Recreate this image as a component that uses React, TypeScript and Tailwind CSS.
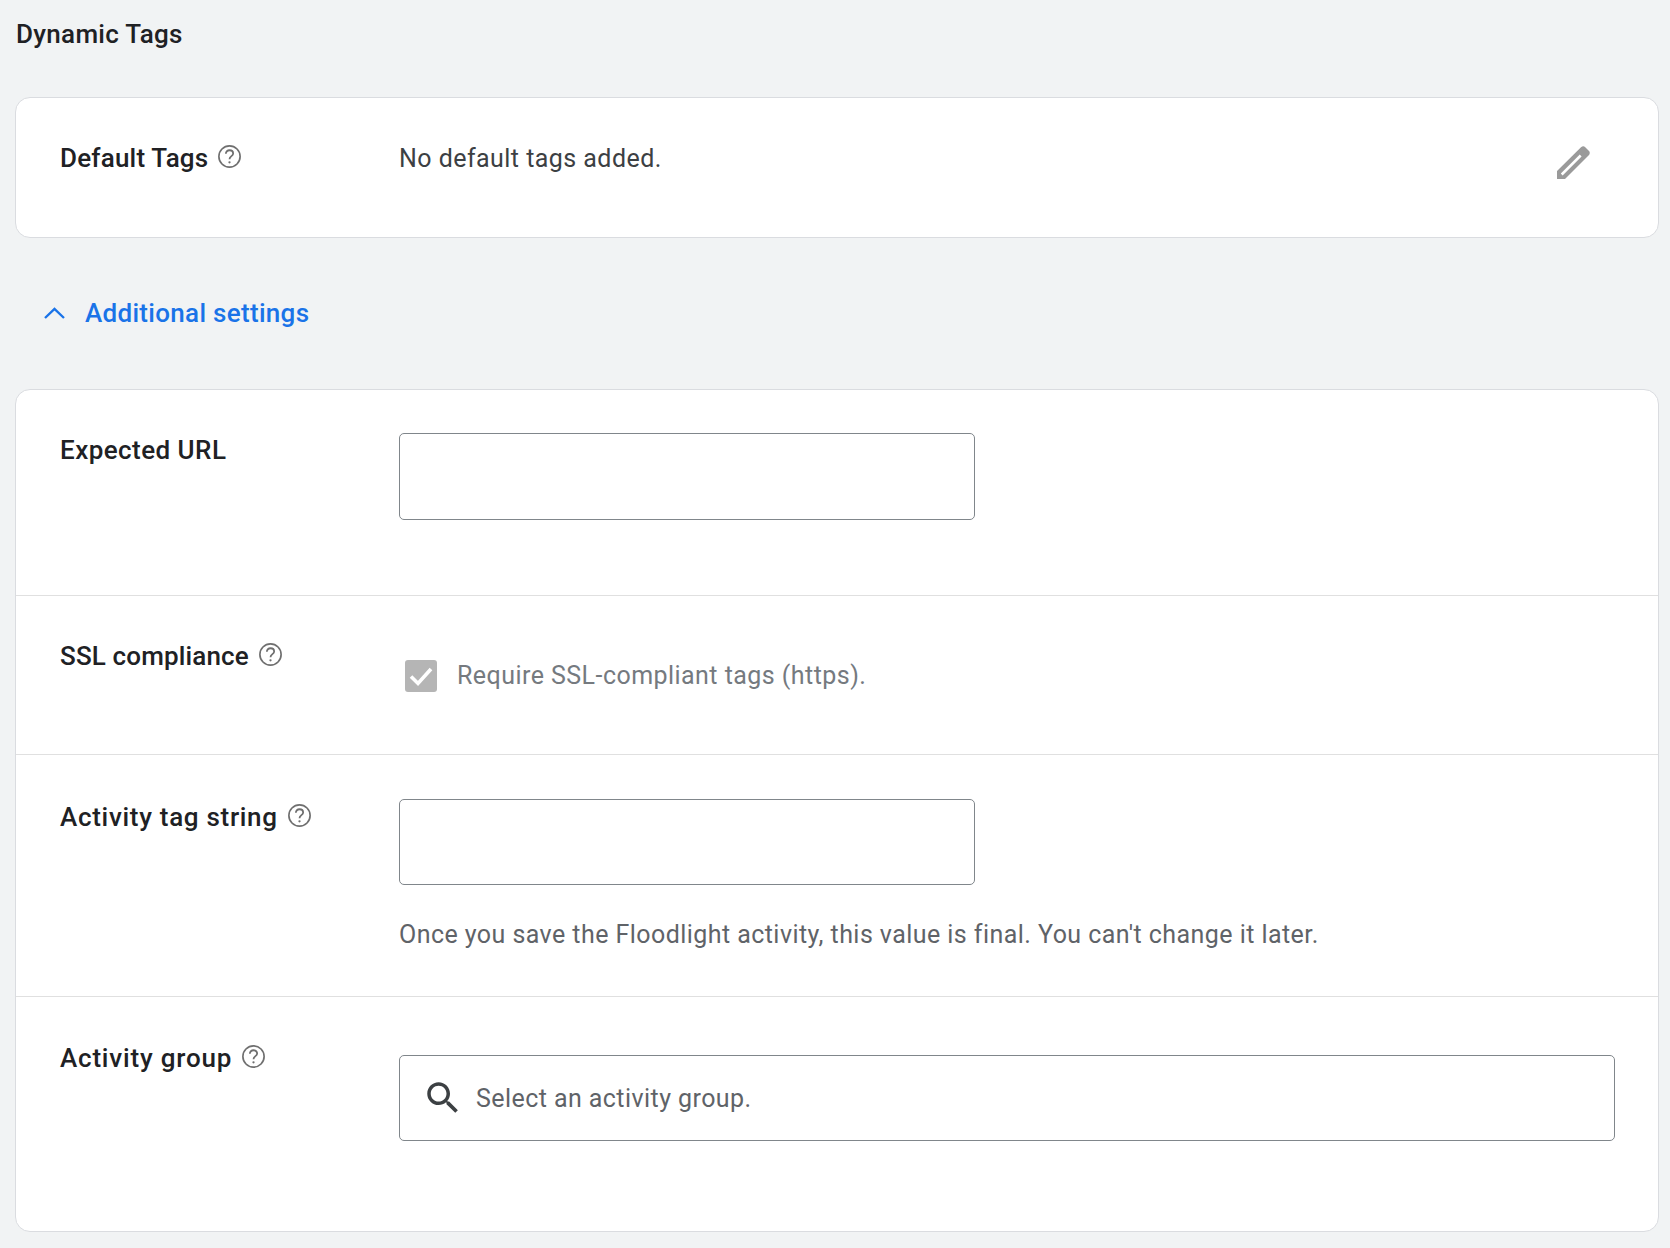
const HelpIcon = () => (
  <svg viewBox="0 0 24 24" className="w-[25px] h-[25px] -mt-[4px] text-[#6f6f6f] shrink-0" fill="none" stroke="currentColor">
    <circle cx="12" cy="12" r="10.200" strokeWidth="1.600" />
    <path d="M8.500 9.400c0-2 1.500-3.400 3.500-3.400s3.500 1.300 3.500 3.200c0 2.500-3.500 2.500-3.500 5.400" strokeWidth="1.700" />
    <circle cx="12" cy="17.600" r="1.100" fill="currentColor" stroke="none" />
  </svg>
);

const Label = ({ text, help, tracking }: { text: string; help?: boolean; tracking: string }) => (
  <div className="w-[339px] shrink-0 flex items-center gap-[9px] text-[26px] leading-[34px] font-medium text-[#202124]">
    <span className={tracking}>{text}</span>
    {help && <HelpIcon />}
  </div>
);

const TextBox = ({ height }: { height: string }) => (
  <div className={`w-[576px] bg-white border border-[#80868b] rounded-[5px] ${height}`} />
);

export default function App() {
  return (
    <div className="min-h-[1248px] bg-[#f1f3f4] pl-[15px] pr-[11px] font-['Roboto',sans-serif]">
      <h1 className="pl-px pt-[16px] h-[97px] text-[26px] leading-[36px] font-medium text-[#202124] tracking-[0.3px]">Dynamic Tags</h1>

      <section className="h-[141px] bg-white border border-[#dadce0] rounded-[15px] flex items-start pl-[44px] pr-[68px] pt-[43px]">
        <Label text="Default Tags" help tracking="tracking-[0.2px]" />
        <div className="flex-1 mt-[1px] text-[25px] leading-[34px] text-[#3c4043] tracking-[0.45px]">No default tags added.</div>
        <svg viewBox="0 0 33 33" className="w-[33px] h-[33px] mt-[5px] text-[#9a9a9a]" fill="currentColor">
          <path
            fillRule="evenodd"
            d="M0 33V25L24 1.200C25.500 0 27 0 28 1L32 5C33 6 33 7.500 32 9L8 33ZM3.800 27.600 5.600 29.400 24.600 10.400 22.800 8.600Z"
          />
        </svg>
      </section>

      <div className="h-[151px] pb-[2px] flex items-center gap-[20px] pl-[29px] text-[#1a73e8]">
        <svg viewBox="0 0 21 12" className="w-[21px] h-[12px]" fill="none" stroke="currentColor" strokeWidth="2.400">
          <path d="M1 11 10.500 2 20 11" />
        </svg>
        <span className="text-[26px] leading-[34px] font-medium tracking-[0.3px]">Additional settings</span>
      </div>

      <section className="h-[843px] bg-white border border-[#dadce0] rounded-[15px] flex flex-col">
        <div className="h-[206px] flex items-start pt-[43px] px-[44px] border-b border-[#e0e0e0]">
          <Label text="Expected URL" tracking="tracking-[0.45px]" />
          <TextBox height="h-[87px]" />
        </div>

        <div className="h-[159px] flex items-start pt-[43px] px-[44px] border-b border-[#e0e0e0]">
          <Label text="SSL compliance" help tracking="tracking-[0.15px]" />
          <div className="flex items-center gap-[20px] pt-[20px] pl-[6px]">
            <div className="w-[32px] h-[32px] rounded-[3px] bg-[#b5b5b5] flex items-center justify-center">
              <svg viewBox="0 0 32 32" className="w-[32px] h-[32px]" fill="none" stroke="white" strokeWidth="3.600">
                <path d="M6 16.500 13 23.500 26 9" />
              </svg>
            </div>
            <span className="text-[25px] leading-[34px] text-[#757a7f] tracking-[0.45px]">Require SSL-compliant tags (https).</span>
          </div>
        </div>

        <div className="h-[242px] flex items-start pt-[44px] px-[44px] border-b border-[#e0e0e0]">
          <div className="mt-[1px]"><Label text="Activity tag string" help tracking="tracking-[0.7px]" /></div>
          <div className="flex flex-col">
            <TextBox height="h-[86px]" />
            <p className="mt-[33px] text-[25px] leading-[34px] text-[#5f6368] tracking-[0.44px] whitespace-nowrap">
              Once you save the Floodlight activity, this value is final. You can't change it later.
            </p>
          </div>
        </div>

        <div className="flex-1 flex items-start pt-[44px] pl-[44px] pr-[43px]">
          <Label text="Activity group" help tracking="tracking-[0.8px]" />
          <div className="flex-1 h-[86px] mt-[14px] bg-white border border-[#80868b] rounded-[5px] flex items-center pl-[22px] gap-[12px]">
            <svg viewBox="0 0 24 24" className="w-[42px] h-[42px] text-[#3c4043]" fill="currentColor">
              <path d="M15.500 14h-.790l-.280-.270C15.410 12.590 16 11.110 16 9.500 16 5.910 13.090 3 9.500 3S3 5.910 3 9.500 5.910 16 9.500 16c1.610 0 3.090-.590 4.230-1.570l.270.280v.790l5 4.990L20.490 19l-4.990-5zm-6 0C7.010 14 5 11.990 5 9.500S7.010 5 9.500 5 14 7.010 14 9.500 11.990 14 9.500 14z" />
            </svg>
            <span className="mt-[2px] text-[25px] leading-[34px] text-[#5f6368] tracking-[0.43px]">Select an activity group.</span>
          </div>
        </div>
      </section>
    </div>
  );
}
